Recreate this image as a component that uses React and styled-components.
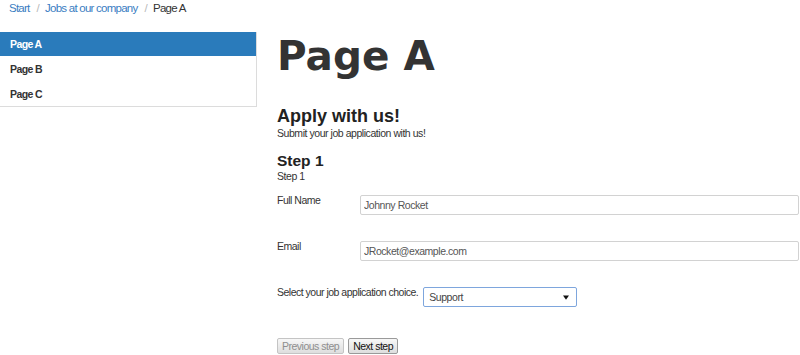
import React from "react";
import styled, { createGlobalStyle } from "styled-components";

const sans = `"Liberation Sans", Arial, Helvetica, sans-serif`;

const Global = createGlobalStyle`
  html, body { margin: 0; padding: 0; background: #fff; }
  body {
    font-family: ${sans};
    color: #333;
  }
  * { box-sizing: border-box; }
`;

const Breadcrumb = styled.nav`
  height: 32px;
  padding: 0 9px;
  font-size: 11.5px;
  letter-spacing: -0.75px;
  line-height: 16px;
  display: flex;
  align-items: flex-start;
`;

const Crumb = styled.a`
  color: ${(p) => (p.$current ? "#333" : "#3a7dc2")};
  text-decoration: none;
`;

const Sep = styled.span`
  color: #b8b8b8;
  padding: 0 6px 0 7px;
`;

const Layout = styled.div`
  display: flex;
  align-items: flex-start;
`;

const Sidebar = styled.ul`
  list-style: none;
  margin: 0;
  padding: 0;
  width: 257px;
  flex: 0 0 257px;
  border-right: 1px solid #dcdcdc;
  border-bottom: 1px solid #dcdcdc;
`;

const NavItem = styled.li`
  height: 24px;
  line-height: 24px;
  padding-left: 10px;
  font-size: 10.5px;
  letter-spacing: -0.6px;
  font-weight: bold;
  margin-bottom: ${(p) => (p.$last ? "0" : "1px")};
  background: ${(p) => (p.$active ? "#2a7bbb" : "#fff")};
  color: ${(p) => (p.$active ? "#fff" : "#333")};
`;

const Main = styled.main`
  flex: 1;
  margin-left: 20px;
  margin-right: 1px;
`;

const Title = styled.h1`
  margin: 2px 0 0;
  font-family: "DejaVu Sans", Verdana, sans-serif;
  font-weight: bold;
  font-size: 40.5px;
  line-height: 44px;
  color: #333;
`;

const Heading = styled.h2`
  margin: 28px 0 0;
  font-weight: bold;
  font-size: 18px;
  line-height: 20px;
  color: #222;
`;

const SubHeading = styled.h3`
  margin: 12px 0 0;
  font-weight: bold;
  font-size: 15.5px;
  line-height: 18px;
  color: #222;
`;

const Small = styled.p`
  margin: ${(p) => (p.$gap ? "1px 0 0" : "0")};
  font-size: 10.5px;
  letter-spacing: -0.45px;
  line-height: 13px;
  color: #333;
`;

const Form = styled.form`
  margin-top: 12px;
  display: flex;
  flex-direction: column;
  gap: 26px;
`;

const Row = styled.div`
  display: flex;
  align-items: flex-start;
`;

const Label = styled.label`
  min-width: 78px;
  margin-right: 5px;
  margin-top: -1px;
  font-size: 10.5px;
  letter-spacing: -0.5px;
  line-height: 13px;
  color: #333;
`;

const Input = styled.input`
  flex: 1;
  height: 20px;
  border: 1px solid #d2d2d2;
  border-radius: 2px;
  padding: 0 3px;
  font-family: ${sans};
  font-size: 10.5px;
  letter-spacing: -0.45px;
  color: #555;
  background: #fff;
  outline: none;
`;

const SelectBox = styled.div`
  width: 154px;
  height: 20px;
  display: flex;
  align-items: center;
  border: 1px solid #7ea6dd;
  border-radius: 2px;
  padding: 0 7px 0 5px;
  background: #fff;
`;

const Select = styled.select`
  flex: 1;
  appearance: none;
  border: none;
  background: transparent;
  font-family: ${sans};
  font-size: 10.5px;
  letter-spacing: -0.45px;
  color: #444;
  padding: 0;
  outline: none;
`;

const Buttons = styled.div`
  margin-top: 31px;
  display: flex;
  gap: 4px;
`;

const Button = styled.button`
  height: 16px;
  padding: 0 4px;
  font-family: ${sans};
  font-size: 10.5px;
  letter-spacing: -0.5px;
  line-height: 14px;
  border: 1px solid ${(p) => (p.disabled ? "#c4c4c4" : "#9a9a9a")};
  border-radius: 2px;
  background: linear-gradient(#f7f7f7, #dedede);
  color: ${(p) => (p.disabled ? "#8e8e8e" : "#111")};
`;

export default function App() {
  return (
    <>
      <Global />
      <Breadcrumb>
        <Crumb href="#">Start</Crumb>
        <Sep>/</Sep>
        <Crumb href="#">Jobs at our company</Crumb>
        <Sep>/</Sep>
        <Crumb $current>Page A</Crumb>
      </Breadcrumb>
      <Layout>
        <Sidebar>
          <NavItem $active>Page A</NavItem>
          <NavItem>Page B</NavItem>
          <NavItem $last>Page C</NavItem>
        </Sidebar>
        <Main>
          <Title>Page A</Title>
          <Heading>Apply with us!</Heading>
          <Small $gap>Submit your job application with us!</Small>
          <SubHeading>Step 1</SubHeading>
          <Small>Step 1</Small>
          <Form onSubmit={(e) => e.preventDefault()}>
            <Row>
              <Label>Full Name</Label>
              <Input defaultValue="Johnny Rocket" />
            </Row>
            <Row>
              <Label>Email</Label>
              <Input defaultValue="JRocket@example.com" />
            </Row>
            <Row>
              <Label>Select your job application choice.</Label>
              <SelectBox>
                <Select defaultValue="Support">
                  <option>Support</option>
                  <option>Sales</option>
                  <option>Development</option>
                </Select>
                <svg width="6" height="5" viewBox="0 0 6 5">
                  <path d="M0 0.5 H6 L3 4.8 Z" fill="#111" />
                </svg>
              </SelectBox>
            </Row>
          </Form>
          <Buttons>
            <Button disabled>Previous step</Button>
            <Button>Next step</Button>
          </Buttons>
        </Main>
      </Layout>
    </>
  );
}
